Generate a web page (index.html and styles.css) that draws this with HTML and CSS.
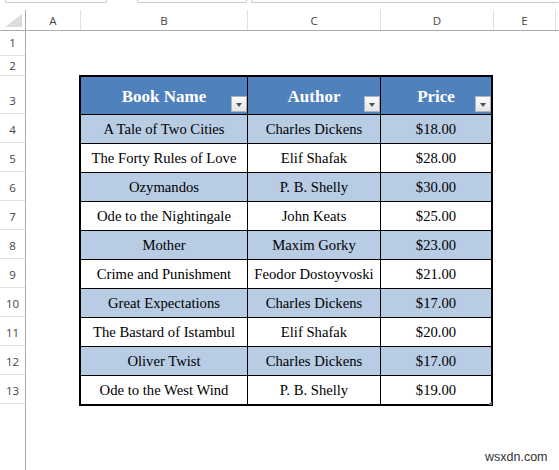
FILE: index.html
```html
<!DOCTYPE html>
<html>
<head>
<meta charset="utf-8">
<link rel="stylesheet" href="styles.css">
</head>
<body>
<div class="app">
  <div class="topstrip">
    <div class="tbox b1"></div>
    <div class="tbox b2"></div>
    <div class="tbox b3"></div>
  </div>
  <div class="colhdr">
    <div class="ch corner"><span class="tri"></span></div>
    <div class="ch">A</div>
    <div class="ch">B</div>
    <div class="ch">C</div>
    <div class="ch">D</div>
    <div class="ch">E</div>
    <div class="ch last"></div>
  </div>
  <div class="body">
    <div class="rowhdr">
      <div class="rh r1">1</div>
      <div class="rh r2">2</div>
      <div class="rh r3">3</div>
      <div class="rh">4</div>
      <div class="rh">5</div>
      <div class="rh">6</div>
      <div class="rh">7</div>
      <div class="rh">8</div>
      <div class="rh">9</div>
      <div class="rh">10</div>
      <div class="rh">11</div>
      <div class="rh">12</div>
      <div class="rh">13</div>
    </div>
    <div class="cells">
      <div class="tbl">
        <div class="hd">Book Name<span class="flt"></span></div>
        <div class="hd">Author<span class="flt"></span></div>
        <div class="hd">Price<span class="flt"></span></div>

        <div class="c band">A Tale of Two Cities</div><div class="c band">Charles Dickens</div><div class="c band">$18.00</div>
        <div class="c">The Forty Rules of Love</div><div class="c">Elif Shafak</div><div class="c">$28.00</div>
        <div class="c band">Ozymandos</div><div class="c band">P. B. Shelly</div><div class="c band">$30.00</div>
        <div class="c">Ode to the Nightingale</div><div class="c">John Keats</div><div class="c">$25.00</div>
        <div class="c band">Mother</div><div class="c band">Maxim Gorky</div><div class="c band">$23.00</div>
        <div class="c">Crime and Punishment</div><div class="c">Feodor Dostoyvoski</div><div class="c">$21.00</div>
        <div class="c band">Great Expectations</div><div class="c band">Charles Dickens</div><div class="c band">$17.00</div>
        <div class="c">The Bastard of Istambul</div><div class="c">Elif Shafak</div><div class="c">$20.00</div>
        <div class="c band">Oliver Twist</div><div class="c band">Charles Dickens</div><div class="c band">$17.00</div>
        <div class="c">Ode to the West Wind</div><div class="c">P. B. Shelly</div><div class="c last">$19.00<span class="handle"></span></div>
      </div>
      <div class="wm">wsxdn.com</div>
    </div>
  </div>
</div>
</body>
</html>
```

FILE: styles.css
```css
* { box-sizing: border-box; }
html, body { margin: 0; padding: 0; background: #fff; }
body { width: 559px; height: 470px; overflow: hidden; }
.app { display: flex; flex-direction: column; height: 470px; }

.topstrip { height: 10px; display: flex; flex: none; }
.tbox { height: 3px; border: 1px solid #c8c8c8; border-top: none; border-radius: 0 0 2px 2px; }
.b1 { margin-left: 5px; width: 102px; }
.b2 { margin-left: 30px; width: 110px; }
.b3 { margin-left: 4px; flex: 1; border-right: none; }

.colhdr {
  flex: none;
  height: 21px;
  display: grid;
  grid-template-columns: 26px 55px 167px 133px 113px 62px 1fr;
  border-bottom: 1px solid #ababab;
}
.ch {
  border-right: 1px solid #e1e1e1;
  font-family: "Open Sans", "DejaVu Sans", sans-serif;
  font-size: 11.5px;
  color: #444;
  display: flex;
  align-items: center;
  justify-content: center;
  padding-top: 1px;
}
.ch.last { border-right: none; }
.corner { position: relative; border-right: 1px solid #ababab; }
.tri {
  position: absolute;
  left: 5px; top: 4px;
  width: 0; height: 0;
  border-left: 17px solid transparent;
  border-bottom: 13px solid #dcdcdc;
}

.body { flex: 1; display: flex; }
.rowhdr { width: 26px; border-right: 1px solid #ababab; flex: none; }
.rh {
  height: 29px;
  border-bottom: 1px solid #e1e1e1;
  font-family: "Open Sans", "DejaVu Sans", sans-serif;
  font-size: 11.5px;
  color: #444;
  display: flex;
  align-items: flex-end;
  justify-content: center;
  padding-bottom: 5px;
}
.rh.r1 { height: 25px; }
.rh.r2 { height: 20px; padding-bottom: 2px; }
.rh.r3 { height: 38px; padding-bottom: 5px; }

.cells { flex: 1; position: relative; padding: 44px 0 0 53px; }

.tbl {
  display: grid;
  width: 414px;
  grid-template-columns: 166px 132px 110px;
  grid-template-rows: 37px repeat(10, 28px);
  gap: 1px;
  background: #000;
  border: 2px solid #000;
}
.hd {
  position: relative;
  background: #4f81bd;
  color: #fff;
  font-family: "Liberation Serif", "Times New Roman", serif;
  font-weight: bold;
  font-size: 17px;
  display: flex;
  align-items: center;
  justify-content: center;
  padding-top: 2px;
}
.flt {
  position: absolute;
  right: 0; bottom: 2px;
  width: 16px; height: 16px;
  background: linear-gradient(#fbfbfb, #e6e6e6);
  border: 1px solid #a9b4c4;
}
.flt::after {
  content: "";
  position: absolute;
  left: 4px; top: 6px;
  border-left: 3.5px solid transparent;
  border-right: 3.5px solid transparent;
  border-top: 4px solid #505050;
}
.c {
  background: #fff;
  color: #000;
  font-family: "Liberation Serif", "Times New Roman", serif;
  font-size: 14.67px;
  display: flex;
  align-items: center;
  justify-content: center;
  padding-top: 1px;
}
.c.band { background: #b8cce4; }
.c.last { position: relative; }
.handle {
  position: absolute;
  right: -1px; bottom: -1px;
  width: 0; height: 0;
  border-left: 4px solid transparent;
  border-bottom: 4px solid #4a5f8c;
}

.wm {
  position: absolute;
  left: 459px; top: 419px;
  font-family: "Liberation Sans", Arial, sans-serif;
  font-size: 12.5px;
  color: #333;
}
```
